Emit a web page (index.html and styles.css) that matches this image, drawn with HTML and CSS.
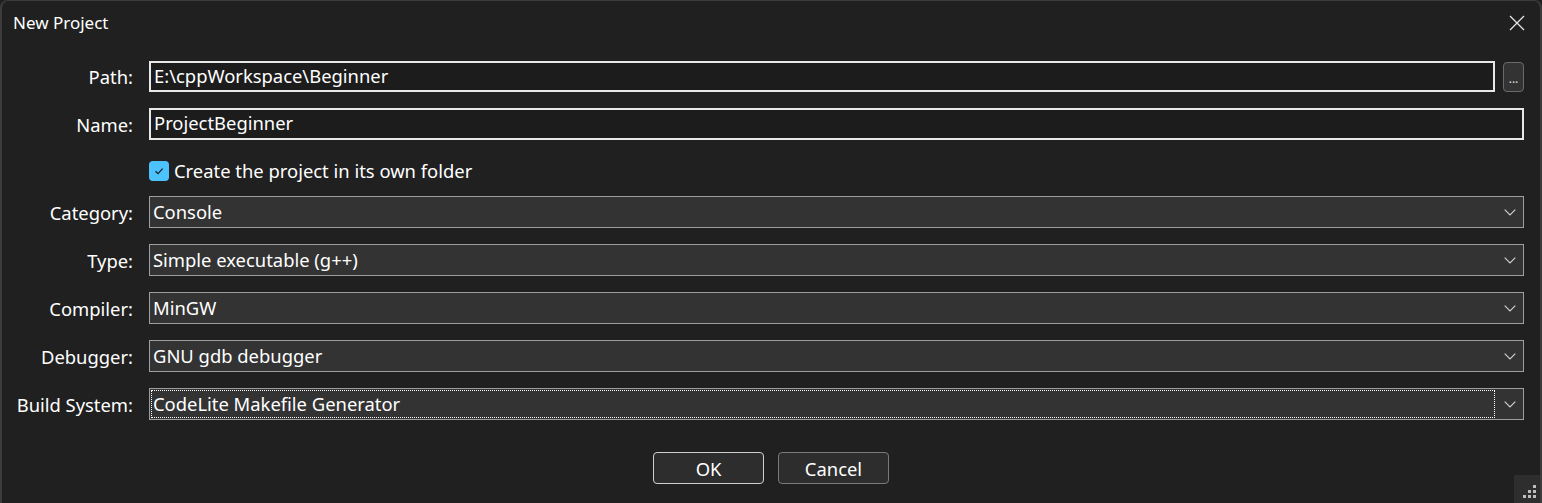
FILE: index.html
```html
<!DOCTYPE html>
<html>
<head>
<meta charset="utf-8">
<link rel="stylesheet" href="styles.css">
</head>
<body>
<div class="window">
  <div class="titlebar">
    <span class="title">New Project</span>
    <span class="close"><svg width="18" height="18" viewBox="0 0 18 18"><path d="M2 2 L16 16 M16 2 L2 16" stroke="#e6e6e6" stroke-width="1.3" fill="none"/></svg></span>
  </div>
  <div class="form">
    <div class="row r-path">
      <label class="lbl">Path:</label>
      <div class="field-wrap">
        <div class="text-field path-field">E:\cppWorkspace\Beginner</div>
        <div class="browse">...</div>
      </div>
    </div>
    <div class="row r-name">
      <label class="lbl">Name:</label>
      <div class="text-field">ProjectBeginner</div>
    </div>
    <div class="row r-check">
      <span class="lbl"></span>
      <div class="check-wrap">
        <span class="checkbox"><svg width="12" height="12" viewBox="0 0 12 12"><path d="M2.5 6.2 L5 8.6 L9.6 3.6" stroke="#1b1b1b" stroke-width="1.2" fill="none"/></svg></span>
        <span class="check-text">Create the project in its own folder</span>
      </div>
    </div>
    <div class="row r-combo">
      <label class="lbl">Category:</label>
      <div class="combo"><span class="combo-text">Console</span><span class="arrow"><svg width="12" height="7" viewBox="0 0 12 7"><path d="M0.7 0.7 L6 6 L11.3 0.7" stroke="#cfcfcf" stroke-width="1.2" fill="none"/></svg></span></div>
    </div>
    <div class="row r-combo">
      <label class="lbl">Type:</label>
      <div class="combo"><span class="combo-text">Simple executable (g++)</span><span class="arrow"><svg width="12" height="7" viewBox="0 0 12 7"><path d="M0.7 0.7 L6 6 L11.3 0.7" stroke="#cfcfcf" stroke-width="1.2" fill="none"/></svg></span></div>
    </div>
    <div class="row r-combo">
      <label class="lbl">Compiler:</label>
      <div class="combo"><span class="combo-text">MinGW</span><span class="arrow"><svg width="12" height="7" viewBox="0 0 12 7"><path d="M0.7 0.7 L6 6 L11.3 0.7" stroke="#cfcfcf" stroke-width="1.2" fill="none"/></svg></span></div>
    </div>
    <div class="row r-combo">
      <label class="lbl">Debugger:</label>
      <div class="combo"><span class="combo-text">GNU gdb debugger</span><span class="arrow"><svg width="12" height="7" viewBox="0 0 12 7"><path d="M0.7 0.7 L6 6 L11.3 0.7" stroke="#cfcfcf" stroke-width="1.2" fill="none"/></svg></span></div>
    </div>
    <div class="row r-combo">
      <label class="lbl">Build System:</label>
      <div class="combo focused"><span class="combo-text focus-ring">CodeLite Makefile Generator</span><span class="arrow"><svg width="12" height="7" viewBox="0 0 12 7"><path d="M0.7 0.7 L6 6 L11.3 0.7" stroke="#cfcfcf" stroke-width="1.2" fill="none"/></svg></span></div>
    </div>
  </div>
  <div class="buttons">
    <button class="btn btn-default">OK</button>
    <button class="btn">Cancel</button>
  </div>
  <div class="grip">
    <svg width="14" height="14" viewBox="0 0 14 14" fill="#bdbdbd">
      <rect x="10" y="0" width="3" height="3"/>
      <rect x="5" y="5" width="3" height="3"/><rect x="10" y="5" width="3" height="3"/>
      <rect x="0" y="10" width="3" height="3"/><rect x="5" y="10" width="3" height="3"/><rect x="10" y="10" width="3" height="3"/>
    </svg>
  </div>
</div>
</body>
</html>
```

FILE: styles.css
```css
* { box-sizing: border-box; }
html, body { margin: 0; padding: 0; background: #202020; }
body {
  width: 1542px;
  height: 503px;
  overflow: hidden;
  font-family: "Noto Sans", "Open Sans", sans-serif;
  font-size: 18.4px;
  color: #ffffff;
}
.window {
  position: relative;
  width: 1542px;
  height: 503px;
  background: #202020;
  border: 1px solid #3c3c3c;
  border-bottom: none;
  border-radius: 8px 8px 0 0;
  border-left-width: 2px;
  border-right-width: 2px;
}
.titlebar {
  height: 44px;
  display: flex;
  align-items: center;
  justify-content: space-between;
  padding: 0 14px 2px 11px;
}
.title {
  font-size: 17px;
  color: #ffffff;
}
.close { display: flex; padding-top: 2px; }
.form {
  display: flex;
  flex-direction: column;
  padding: 16px 16px 0 0;
}
.row {
  display: grid;
  grid-template-columns: 131px 1fr;
  column-gap: 16px;
  align-items: center;
}
.lbl {
  text-align: right;
  color: #ffffff;
  white-space: nowrap;
}
.r-path { height: 31px; }
.r-name { height: 32px; margin-top: 16px; }
.r-check { height: 20px; margin-top: 18px; }
.r-combo { height: 32px; margin-top: 16px; }
.r-check + .r-combo { margin-top: 18px; }
.field-wrap {
  display: flex;
  align-items: center;
  gap: 8px;
  height: 100%;
}
.text-field {
  height: 100%;
  border: 2px solid #e8e8e8;
  background: #1c1c1c;
  padding: 0 4px 1px 3px;
  display: flex;
  align-items: center;
  line-height: 1;
}
.path-field { flex: 1; }
.browse {
  width: 21px;
  height: 30px;
  border: 1px solid #6a6a6a;
  border-radius: 4px;
  background: #333333;
  font-size: 12px;
  display: flex;
  align-items: center;
  justify-content: center;
  padding-top: 4px;
  color: #e0e0e0;
}
.check-wrap {
  display: flex;
  align-items: center;
  gap: 5px;
}
.checkbox {
  width: 20px;
  height: 20px;
  border-radius: 4px;
  background: #4cc2ff;
  display: flex;
  align-items: center;
  justify-content: center;
}
.combo {
  height: 100%;
  background: #333333;
  border: 1px solid #9e9e9e;
  display: flex;
  align-items: center;
  justify-content: space-between;
  padding: 0 7px 0 3px;
}
.combo-text {
  line-height: 1;
}
.focused { padding-left: 2px; }
.focus-ring {
  flex: 1;
  height: 26px;
  display: flex;
  align-items: center;
  outline: 1px dotted #ffffff;
  margin-right: 10px;
  padding-left: 1px;
}
.arrow { display: flex; }
.buttons {
  display: flex;
  justify-content: center;
  gap: 14px;
  margin-top: 32px;
}
.btn {
  width: 111px;
  height: 32px;
  background: #2d2d2d;
  border: 1px solid #7a7a7a;
  border-radius: 4px;
  color: #ffffff;
  font-family: inherit;
  font-size: 18.4px;
  padding: 0;
}
.btn-default { border-color: #cfcfcf; }
.grip {
  position: absolute;
  right: 0;
  bottom: 0;
  width: 26px;
  height: 28px;
  background: #2e2e2e;
  display: flex;
  align-items: flex-end;
  justify-content: flex-end;
  padding: 0 3px 4px 0;
}
```
